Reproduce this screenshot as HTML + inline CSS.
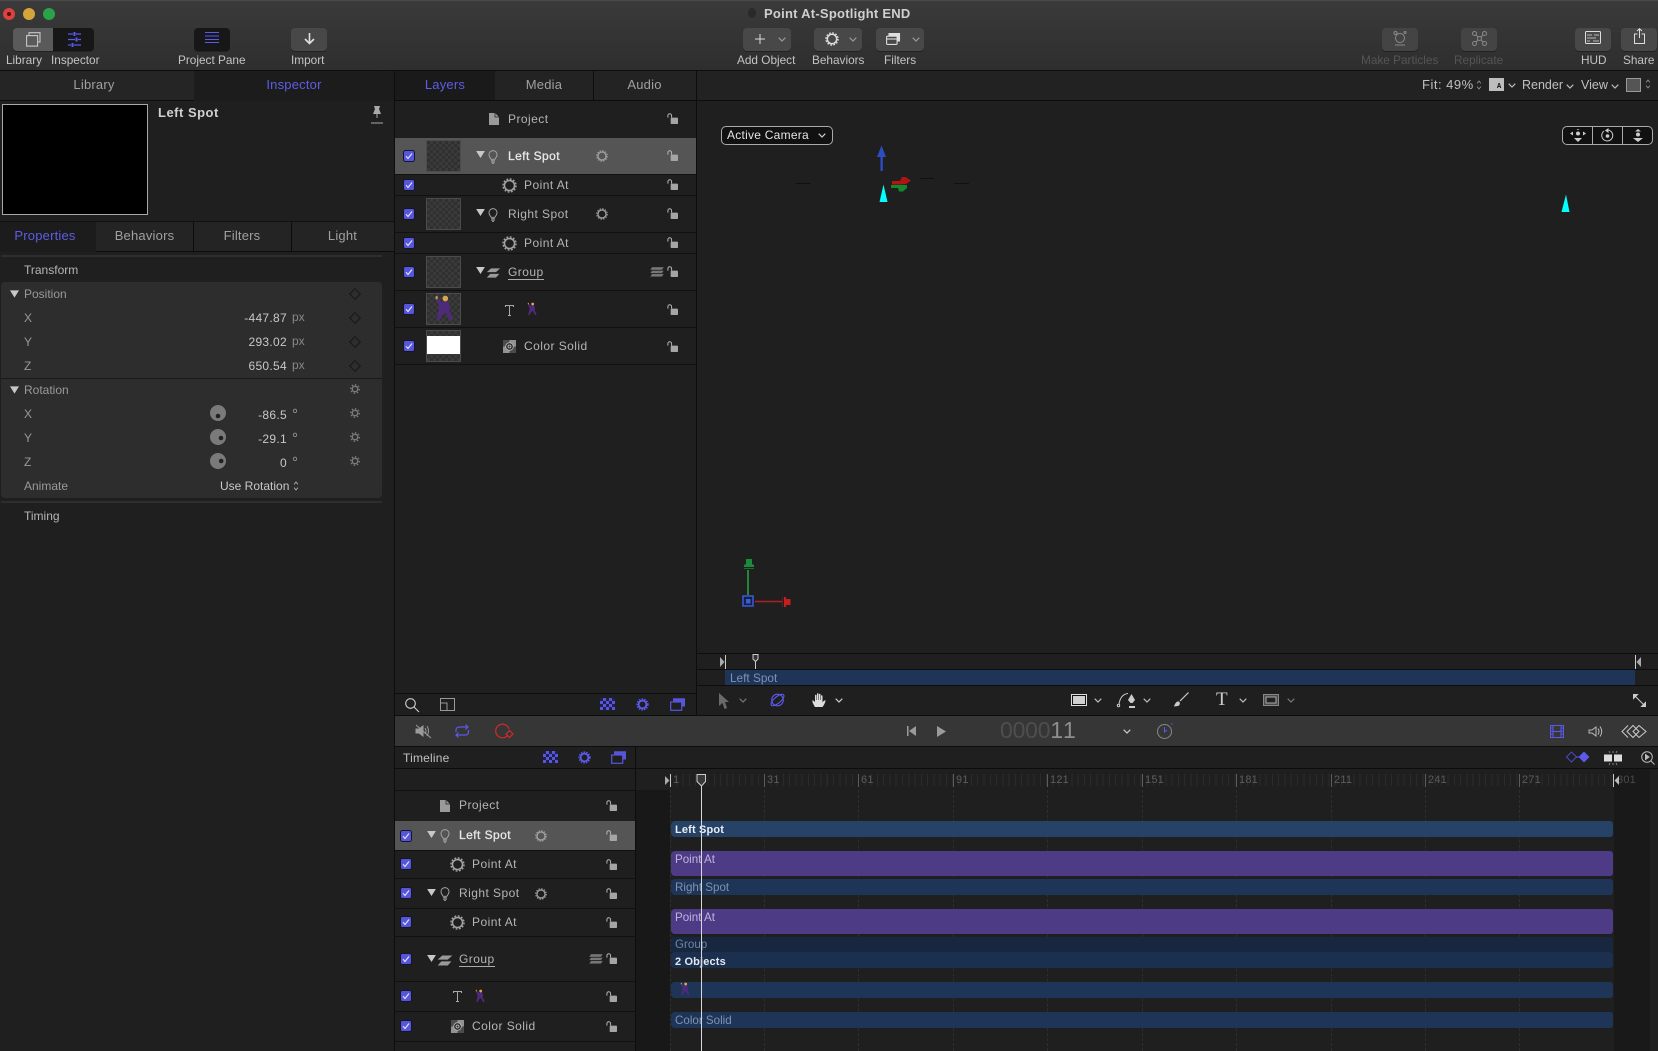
<!DOCTYPE html>
<html><head><meta charset="utf-8"><title>Point At-Spotlight END</title>
<style>
html,body{margin:0;padding:0;width:1658px;height:1051px;overflow:hidden;background:#1f1f1f}
body{position:relative;font-family:"Liberation Sans",sans-serif;font-size:12px;color:#b9b9b9}
.a{position:absolute}
.t{position:absolute;white-space:nowrap;font-size:12px;line-height:14px;color:#b5b5b5}
.l{letter-spacing:.45px}
.b{font-weight:bold}
svg.i{position:absolute;overflow:visible}
.k{position:absolute;background:#0d0d0d}
.btn{position:absolute;top:28px;height:23px;border-radius:4px;background:#484848;box-shadow:0 1px 0 #222}
.lab{position:absolute;top:53px;white-space:nowrap;line-height:14px;color:#c4c4c4;font-size:11.8px}
.tab{position:absolute;text-align:center;line-height:14px;color:#a0a0a0;font-size:13px;letter-spacing:.2px}
.th{position:absolute;left:426px;width:33px;height:30px;border:1px solid #4c4c4c;background:repeating-conic-gradient(#3a3a3a 0 25%,#303030 0 50%) 0 0/6px 6px}
.bar{position:absolute;left:671px;width:942px;background:#1f3557;border-radius:4px 3px 3px 4px;height:16px;color:#7d93b3;font-size:11.6px;line-height:15px;padding-left:4px;box-sizing:border-box;white-space:nowrap}
.pu{background:#4e3b86;color:#c0b3de;height:25px}
.val{position:absolute;width:100px;text-align:right;line-height:14px;font-size:12px;color:#c8c8c8;letter-spacing:.3px}
.deg{position:absolute;left:292px;font-size:15px;line-height:14px;color:#999}
.rn{position:absolute;top:773px;font-size:11px;line-height:14px;color:#5c5c5c;letter-spacing:.2px}
.mt{position:absolute;top:774px;width:1px;height:13px;background:#5c5c5c}
.dl{position:absolute;top:790px;height:261px;width:0;border-left:1px dashed #2e2e2e}
</style></head><body>
<svg width="0" height="0" style="position:absolute">
<defs>
<symbol id="lock" viewBox="0 0 12 12"><path d="M1 5V2.8C1 1.500 2 .8 3 .8s2 .7 2 2V5" fill="none" stroke="#b5b5b5" stroke-width="1.100"/><rect x="4" y="5" width="8" height="7" rx="1" fill="#a5a5a5"/></symbol>
<symbol id="gear" viewBox="0 0 14 14"><circle cx="7" cy="7" r="4.700" fill="none" stroke="#a5a5a5" stroke-width="1.400"/><circle cx="7" cy="7" r="6.100" fill="none" stroke="#a5a5a5" stroke-width="1.300" stroke-dasharray="1.700 1.500"/></symbol>
<symbol id="gs" viewBox="0 0 14 14"><circle cx="7" cy="7" r="3.800" fill="none" stroke="#7c7c7c" stroke-width="1.900"/><circle cx="7" cy="7" r="5.900" fill="none" stroke="#7c7c7c" stroke-width="2" stroke-dasharray="2 2.600"/></symbol>
<symbol id="bgear" viewBox="0 0 14 14"><circle cx="7" cy="7" r="4.200" fill="none" stroke="#5a5aec" stroke-width="2"/><circle cx="7" cy="7" r="5.800" fill="none" stroke="#5a5aec" stroke-width="1.600" stroke-dasharray="1.600 1.300"/></symbol>
<symbol id="chk" viewBox="0 0 12 12"><rect x=".5" y=".5" width="11" height="11" rx="2" fill="#5656dc" stroke="#15152a"/><path d="M3 6.200l2 2.300L9 3.500" fill="none" stroke="#e8e8ff" stroke-width="1.100"/></symbol>
<symbol id="bulb" viewBox="0 0 10 15"><path d="M3 10C2 8 .7 7.300.7 5A4.300 4.300 0 0 1 9.300 5C9.300 7.300 8 8 7 10Z" fill="none" stroke="#a8a8a8"/><path d="M3 11.500h4M3 13h4M4 14.500h2" stroke="#a8a8a8" fill="none"/></symbol>
<symbol id="tri" viewBox="0 0 10 8"><path d="M0 0H10L5 8Z" fill="#c8c8c8"/></symbol>
<symbol id="dia" viewBox="0 0 12 12"><path d="M6 .7L11.300 6 6 11.300.7 6Z" fill="none" stroke="#171717" stroke-width="1"/></symbol>
<symbol id="chev" viewBox="0 0 8 5"><path d="M.7.7L4 4 7.300.7" fill="none" stroke="currentColor" stroke-width="1.200"/></symbol>
<symbol id="updn" viewBox="0 0 6 12"><path d="M.7 4L3 1.200 5.300 4M.7 8L3 10.800 5.300 8" fill="none" stroke="currentColor"/></symbol>
<symbol id="mgroup" viewBox="0 0 16 12"><path d="M5 .5H16L11 5H0ZM4 7H15L11 11.500H0Z" fill="#9a9a9a"/></symbol>
<symbol id="stack" viewBox="0 0 14 10"><path d="M2 0H14L12 3H0ZM2 3.500H14L12 6.300H0ZM2 6.800H14L12 9.800H0Z" fill="#777" stroke="#222" stroke-width=".4"/></symbol>
<symbol id="cs" viewBox="0 0 13 13"><rect width="13" height="13" fill="#929292"/><path d="M0 0H6.500V6.500H0ZM6.500 6.500H13V13H6.500Z" fill="#4c4c4c"/><circle cx="6.500" cy="6.500" r="3.800" fill="#2c2c2c" stroke="#bbb" stroke-width=".8"/><circle cx="6.500" cy="6.500" r="1.500" fill="none" stroke="#ccc" stroke-width=".8"/></symbol>
<symbol id="doc" viewBox="0 0 10 12"><path d="M0 0H6L10 4V12H0Z" fill="#9a9a9a"/><path d="M6 0V4H10" fill="none" stroke="#1e1e1e" stroke-width=".7"/></symbol>
<symbol id="man" viewBox="0 0 12 16"><path d="M7.500 2.500L9.500 6 9.300 9.500 11.500 14.500 9.800 15.500 7 10.500 5.500 11 3 15.500 1.500 15 3 8.500 3 6.500 1 2.500 2.300 1.800 5 4.500 6 4Z" fill="#4f2a7c"/><circle cx="6.800" cy="2" r="1.700" fill="#d4a94a"/><rect x="1" y=".6" width="1.200" height="1.800" fill="#d4a94a"/></symbol>
<symbol id="checker" viewBox="0 0 15 12"><rect width="15" height="12" fill="#5656dc"/><path d="M0 0h3v3H0zM6 0h3v3H6zM12 0h3v3h-3zM3 3h3v3H3zM9 3h3v3H9zM0 6h3v3H0zM6 6h3v3H6zM12 6h3v3h-3zM3 9h3v3H3zM9 9h3v3H9z" fill="#20204a"/></symbol>
<symbol id="filt" viewBox="0 0 15 13"><path d="M3.500 3V.7H14.500V8H12" fill="#5656dc" stroke="#5656dc"/><rect x=".7" y="4" width="11" height="8.300" fill="#1f1f1f" stroke="#5656dc" stroke-width="1.200"/><rect x="3.500" y="1.500" width="9" height="2.500" fill="#5656dc"/></symbol>
</defs></svg>

<!-- toolbar -->
<div class="a" style="left:0;top:0;width:1658px;height:70px;background:linear-gradient(#3a3a3a,#2e2e2e);border-top:1px solid #4a4a4a;box-sizing:border-box"></div>
<div class="k" style="left:0;top:70px;width:1658px;height:1px"></div>
<div class="a" style="left:3px;top:8px;width:12px;height:12px;border-radius:50%;background:#d9423f"></div><div class="a" style="left:7px;top:12px;width:4px;height:4px;border-radius:50%;background:#5a0c0a"></div>
<div class="a" style="left:23px;top:8px;width:12px;height:12px;border-radius:50%;background:#d5a53a"></div>
<div class="a" style="left:43px;top:8px;width:12px;height:12px;border-radius:50%;background:#2aa24a"></div>
<div class="a" style="left:748px;top:8px;width:8px;height:10px;border-radius:50%;background:#2a2a2a"></div>
<div class="t b" style="left:764px;top:7px;font-size:13px;color:#cfcfcf;letter-spacing:.25px">Point At-Spotlight END</div>

<div class="btn" style="left:13px;width:41px;border-radius:4px 0 0 4px;background:#5a5a5a"></div>
<div class="btn" style="left:53px;width:41px;border-radius:0 4px 4px 0;background:#171717"></div>
<svg class="i" style="left:26px;top:32px" width="15" height="15" fill="none" stroke="#c8c8c8" stroke-width="1.100"><path d="M3 3V.7H14V10H11.500"/><rect x=".6" y="3.600" width="11" height="10.500" fill="#5a5a5a"/></svg>
<svg class="i" style="left:67px;top:32px" width="15" height="15" stroke="#5a5aec" stroke-width="1.200"><path d="M1 2H6M9 2H14M1 7.500H8M11 7.500H14M1 13H4M7 13H14"/><path d="M7.500 0V4M9.500 5.500V9.500M5.500 11V15" stroke-width="2"/></svg>
<div class="lab" style="left:6px">Library</div><div class="lab" style="left:51px">Inspector</div>

<div class="btn" style="left:194px;width:36px;background:#171717"></div>
<svg class="i" style="left:205px;top:32px" width="14" height="11" stroke="#5a5aec"><path d="M0 .5H14M0 4H14M0 7.500H14M0 10.500H14"/></svg>
<div class="lab" style="left:178px">Project Pane</div>
<div class="btn" style="left:291px;width:36px"></div>
<svg class="i" style="left:304px;top:33px" width="11" height="11" fill="none" stroke="#e0e0e0" stroke-width="1.600"><path d="M5.500 0V10M1 6L5.500 10.500 10 6"/></svg>
<div class="lab" style="left:291px">Import</div>

<div class="btn" style="left:743px;width:48px"></div>
<svg class="i" style="left:755px;top:34px" width="10" height="10" stroke="#ddd"><path d="M5 0V10M0 5H10"/></svg>
<svg class="i" style="left:778px;top:37px;color:#9a9a9a" width="8" height="5"><use href="#chev"/></svg>
<div class="lab" style="left:737px">Add Object</div>
<div class="btn" style="left:814px;width:48px"></div>
<svg class="i" style="left:825px;top:32px" width="14" height="14" viewBox="0 0 14 14" fill="none" stroke="#ddd"><circle cx="7" cy="7" r="4.700" stroke-width="1.500"/><circle cx="7" cy="7" r="6.100" stroke-width="1.300" stroke-dasharray="1.700 1.500"/></svg>
<svg class="i" style="left:849px;top:37px;color:#9a9a9a" width="8" height="5"><use href="#chev"/></svg>
<div class="lab" style="left:812px">Behaviors</div>
<div class="btn" style="left:876px;width:48px"></div>
<svg class="i" style="left:886px;top:33px" width="14" height="12" fill="none" stroke="#ddd" stroke-width="1.100"><path d="M3 3V.6H13.500V8H11" fill="#ddd"/><rect x=".6" y="3.200" width="10.500" height="8.200" rx="1" fill="#484848"/><path d="M1 6H11"/></svg>
<svg class="i" style="left:912px;top:37px;color:#9a9a9a" width="8" height="5"><use href="#chev"/></svg>
<div class="lab" style="left:884px">Filters</div>

<div class="btn" style="left:1382px;width:36px;background:#444"></div>
<svg class="i" style="left:1393px;top:31px" width="15" height="15" fill="none" stroke="#8a8a8a"><circle cx="7" cy="7" r="4.500"/><circle cx="2.500" cy="2" r="1.500"/><circle cx="12" cy="1.500" r="1"/><path d="M2 14H12"/></svg>
<div class="lab" style="left:1361px;color:#555">Make Particles</div>
<div class="btn" style="left:1461px;width:36px;background:#444"></div>
<svg class="i" style="left:1472px;top:31px" width="15" height="15" fill="none" stroke="#8a8a8a"><circle cx="7.500" cy="7.500" r="2"/><circle cx="2.500" cy="2.500" r="2"/><circle cx="12.500" cy="2.500" r="2"/><circle cx="2.500" cy="12.500" r="2"/><circle cx="12.500" cy="12.500" r="2"/><path d="M4 4L6 6M11 4L9 6M4 11L6 9M11 11L9 9"/></svg>
<div class="lab" style="left:1454px;color:#555">Replicate</div>
<div class="btn" style="left:1575px;width:36px"></div>
<svg class="i" style="left:1585px;top:31px" width="16" height="13" fill="none" stroke="#ddd"><rect x=".5" y=".5" width="15" height="12" rx="1"/><path d="M2 4H7M9 4H14M2 7H11M2 10H5M8 10H14" stroke-width=".8"/></svg>
<div class="lab" style="left:1581px">HUD</div>
<div class="btn" style="left:1621px;width:36px"></div>
<svg class="i" style="left:1634px;top:28px" width="11" height="16" fill="none" stroke="#ddd"><path d="M3.500 6H.5V15.500H10.500V6H7.500M5.500 10V1M3 3L5.500.7 8 3"/></svg>
<div class="lab" style="left:1623px">Share</div>

<!-- inspector panel -->
<div class="a" style="left:0;top:71px;width:194px;height:29px;background:#252525"></div>
<div class="a" style="left:194px;top:71px;width:200px;height:30px;background:#1c1c1c"></div>
<div class="k" style="left:0;top:100px;width:194px;height:1px"></div>
<div class="k" style="left:394px;top:71px;width:1px;height:980px"></div>
<div class="tab" style="left:0;top:78px;width:188px">Library</div>
<div class="tab" style="left:194px;top:78px;width:200px;color:#5d5de6">Inspector</div>
<div class="a" style="left:2px;top:104px;width:144px;height:109px;background:#000;border:1px solid #a8a8a8"></div>
<div class="t b" style="left:158px;top:106px;font-size:13px;color:#d0d0d0;letter-spacing:.5px">Left Spot</div>
<svg class="i" style="left:371px;top:106px" width="12" height="18" fill="#aaa"><path d="M3 0H9L8 3 10 8H2L4 3Z"/><path d="M6 8V12" stroke="#aaa"/><path d="M0 17H12" stroke="#aaa"/></svg>
<div class="k" style="left:0;top:221px;width:394px;height:1px;background:#111"></div>
<div class="a" style="left:0;top:222px;width:96px;height:30px;background:#1c1c1c"></div>
<div class="a" style="left:96px;top:222px;width:298px;height:29px;background:#242424"></div>
<div class="k" style="left:96px;top:251px;width:298px;height:1px"></div>
<div class="k" style="left:193px;top:222px;width:1px;height:29px"></div>
<div class="k" style="left:291px;top:222px;width:1px;height:29px"></div>
<div class="tab" style="left:0;top:229px;width:90px;color:#5d5de6">Properties</div>
<div class="tab" style="left:96px;top:229px;width:97px">Behaviors</div>
<div class="tab" style="left:193px;top:229px;width:98px">Filters</div>
<div class="tab" style="left:291px;top:229px;width:103px">Light</div>
<div class="a" style="left:1px;top:255px;width:381px;height:2px;background:#2e2e2e"></div>
<div class="t" style="left:24px;top:263px">Transform</div>
<div class="a" style="left:1px;top:282px;width:381px;height:216px;background:#2d2d2d;border-radius:4px"></div>
<div class="a" style="left:1px;top:378px;width:381px;height:1px;background:#1a1a1a"></div>
<div class="a" style="left:1px;top:501px;width:381px;height:2px;background:#2e2e2e"></div>
<svg class="i" style="left:10px;top:290px" width="9" height="8"><use href="#tri"/></svg>
<svg class="i" style="left:10px;top:386px" width="9" height="8"><use href="#tri"/></svg>
<div class="t" style="left:24px;top:287px;color:#999">Position</div>
<div class="t" style="left:24px;top:311px;color:#999">X</div>
<div class="t" style="left:24px;top:335px;color:#999">Y</div>
<div class="t" style="left:24px;top:359px;color:#999">Z</div>
<div class="t" style="left:24px;top:383px;color:#999">Rotation</div>
<div class="t" style="left:24px;top:407px;color:#999">X</div>
<div class="t" style="left:24px;top:431px;color:#999">Y</div>
<div class="t" style="left:24px;top:455px;color:#999">Z</div>
<div class="t" style="left:24px;top:479px;color:#999">Animate</div>
<div class="val" style="left:187px;top:311px">-447.87</div><div class="t" style="left:292px;top:310px;color:#888">px</div>
<div class="val" style="left:187px;top:335px">293.02</div><div class="t" style="left:292px;top:334px;color:#888">px</div>
<div class="val" style="left:187px;top:359px">650.54</div><div class="t" style="left:292px;top:358px;color:#888">px</div>
<div class="val" style="left:187px;top:408px">-86.5</div><div class="deg" style="top:408px">°</div>
<div class="val" style="left:187px;top:432px">-29.1</div><div class="deg" style="top:432px">°</div>
<div class="val" style="left:187px;top:456px">0</div><div class="deg" style="top:456px">°</div>
<div class="t" style="left:220px;top:479px;color:#c8c8c8">Use Rotation</div>
<svg class="i" style="left:293px;top:481px;color:#bbb" width="6" height="10"><use href="#updn"/></svg>
<svg class="i" style="left:349px;top:288px" width="12" height="12"><use href="#dia"/></svg>
<svg class="i" style="left:349px;top:312px" width="12" height="12"><use href="#dia"/></svg>
<svg class="i" style="left:349px;top:336px" width="12" height="12"><use href="#dia"/></svg>
<svg class="i" style="left:349px;top:360px" width="12" height="12"><use href="#dia"/></svg>
<svg class="i" style="left:350px;top:384px" width="10" height="10"><use href="#gs"/></svg>
<svg class="i" style="left:350px;top:408px" width="10" height="10"><use href="#gs"/></svg>
<svg class="i" style="left:350px;top:432px" width="10" height="10"><use href="#gs"/></svg>
<svg class="i" style="left:350px;top:456px" width="10" height="10"><use href="#gs"/></svg>
<svg class="i" style="left:210px;top:405px" width="16" height="16"><circle cx="8" cy="8" r="8" fill="#7a7a7a"/><circle cx="8" cy="11" r="2.300" fill="#222"/></svg>
<svg class="i" style="left:210px;top:429px" width="16" height="16"><circle cx="8" cy="8" r="8" fill="#7a7a7a"/><circle cx="11" cy="9" r="2.300" fill="#222"/></svg>
<svg class="i" style="left:210px;top:453px" width="16" height="16"><circle cx="8" cy="8" r="8" fill="#7a7a7a"/><circle cx="11.200" cy="8" r="2.300" fill="#222"/></svg>
<div class="t" style="left:24px;top:509px">Timing</div>

<!-- layers panel -->
<div class="a" style="left:395px;top:71px;width:100px;height:30px;background:#1a1a1a"></div>
<div class="a" style="left:495px;top:71px;width:201px;height:29px;background:#232323"></div>
<div class="k" style="left:495px;top:100px;width:201px;height:1px"></div>
<div class="k" style="left:593px;top:71px;width:1px;height:29px"></div>
<div class="k" style="left:696px;top:71px;width:1px;height:645px"></div>
<div class="tab" style="left:395px;top:78px;width:100px;color:#5d5de6">Layers</div>
<div class="tab" style="left:495px;top:78px;width:98px">Media</div>
<div class="tab" style="left:593px;top:78px;width:103px">Audio</div>
<div class="a" style="left:395px;top:138px;width:301px;height:36px;background:#555"></div>
<div class="k" style="left:395px;top:174px;width:301px;height:1px;background:#111"></div>
<div class="k" style="left:395px;top:195px;width:301px;height:1px;background:#111"></div>
<div class="k" style="left:395px;top:232px;width:301px;height:1px;background:#111"></div>
<div class="k" style="left:395px;top:253px;width:301px;height:1px;background:#111"></div>
<div class="k" style="left:395px;top:290px;width:301px;height:1px;background:#111"></div>
<div class="k" style="left:395px;top:327px;width:301px;height:1px;background:#111"></div>
<div class="k" style="left:395px;top:364px;width:301px;height:1px;background:#111"></div>

<svg class="i" style="left:489px;top:113px" width="10" height="12"><use href="#doc"/></svg>
<div class="t l" style="left:508px;top:112px">Project</div>
<svg class="i" style="left:667px;top:113px" width="11" height="11"><use href="#lock"/></svg>

<svg class="i" style="left:403px;top:150px" width="12" height="12"><use href="#chk"/></svg>
<div class="th" style="top:140px"></div>
<svg class="i" style="left:476px;top:151px" width="9" height="7"><use href="#tri"/></svg>
<svg class="i" style="left:488px;top:150px" width="10" height="14"><use href="#bulb"/></svg>
<div class="t l" style="left:508px;top:149px;color:#e8e8e8;-webkit-text-stroke:.3px #e8e8e8">Left Spot</div>
<svg class="i" style="left:596px;top:150px" width="12" height="12"><use href="#gear"/></svg>
<svg class="i" style="left:667px;top:150px" width="11" height="11"><use href="#lock"/></svg>

<svg class="i" style="left:403px;top:179px" width="12" height="12"><use href="#chk"/></svg>
<svg class="i" style="left:502px;top:178px" width="15" height="15"><use href="#gear"/></svg>
<div class="t l" style="left:524px;top:178px">Point At</div>
<svg class="i" style="left:667px;top:179px" width="11" height="11"><use href="#lock"/></svg>

<svg class="i" style="left:403px;top:208px" width="12" height="12"><use href="#chk"/></svg>
<div class="th" style="top:198px"></div>
<svg class="i" style="left:476px;top:209px" width="9" height="7"><use href="#tri"/></svg>
<svg class="i" style="left:488px;top:208px" width="10" height="14"><use href="#bulb"/></svg>
<div class="t l" style="left:508px;top:207px">Right Spot</div>
<svg class="i" style="left:596px;top:208px" width="12" height="12"><use href="#gear"/></svg>
<svg class="i" style="left:667px;top:208px" width="11" height="11"><use href="#lock"/></svg>

<svg class="i" style="left:403px;top:237px" width="12" height="12"><use href="#chk"/></svg>
<svg class="i" style="left:502px;top:236px" width="15" height="15"><use href="#gear"/></svg>
<div class="t l" style="left:524px;top:236px">Point At</div>
<svg class="i" style="left:667px;top:237px" width="11" height="11"><use href="#lock"/></svg>

<svg class="i" style="left:403px;top:266px" width="12" height="12"><use href="#chk"/></svg>
<div class="th" style="top:256px"></div>
<svg class="i" style="left:476px;top:267px" width="9" height="7"><use href="#tri"/></svg>
<svg class="i" style="left:486px;top:268px" width="15" height="10"><use href="#mgroup"/></svg>
<div class="t l" style="left:508px;top:266px;border-bottom:1px solid #aaa;line-height:13px">Group</div>
<svg class="i" style="left:650px;top:267px" width="14" height="10"><use href="#stack"/></svg>
<svg class="i" style="left:667px;top:266px" width="11" height="11"><use href="#lock"/></svg>

<svg class="i" style="left:403px;top:303px" width="12" height="12"><use href="#chk"/></svg>
<div class="th" style="top:293px"></div>
<svg class="i" style="left:434px;top:294px" width="20" height="29"><use href="#man"/></svg>
<svg class="i" style="left:505px;top:305px" width="9" height="11" fill="none" stroke="#aaa"><path d="M.5 2V.5H8.500V2M4.500 .5V10.500M3 10.500H6"/></svg>
<svg class="i" style="left:527px;top:302px" width="10" height="14"><use href="#man"/></svg>
<svg class="i" style="left:667px;top:304px" width="11" height="11"><use href="#lock"/></svg>

<svg class="i" style="left:403px;top:340px" width="12" height="12"><use href="#chk"/></svg>
<div class="th" style="top:330px"></div>
<div class="a" style="left:427px;top:336px;width:33px;height:18px;background:#fff"></div>
<svg class="i" style="left:503px;top:340px" width="13" height="13"><use href="#cs"/></svg>
<div class="t l" style="left:524px;top:339px">Color Solid</div>
<svg class="i" style="left:667px;top:341px" width="11" height="11"><use href="#lock"/></svg>

<div class="k" style="left:395px;top:693px;width:301px;height:1px"></div>
<svg class="i" style="left:405px;top:698px" width="14" height="14" fill="none" stroke="#ccc" stroke-width="1.100"><circle cx="5.500" cy="5.500" r="4.800"/><path d="M9 9L14 14"/></svg>
<svg class="i" style="left:440px;top:698px" width="15" height="13" fill="none" stroke="#999"><rect x=".5" y=".5" width="14" height="12"/><path d="M.5 5H7V12.500"/></svg>
<svg class="i" style="left:600px;top:698px" width="15" height="12"><use href="#checker"/></svg>
<svg class="i" style="left:636px;top:698px" width="13" height="13"><use href="#bgear"/></svg>
<svg class="i" style="left:670px;top:698px" width="15" height="13"><use href="#filt"/></svg>

<!-- canvas -->
<div class="k" style="left:395px;top:100px;width:1263px;height:1px"></div>
<div class="a" style="left:697px;top:71px;width:961px;height:29px;background:#222"></div>
<div class="t" style="left:1422px;top:78px;font-size:13px;color:#c0c0c0;letter-spacing:.5px">Fit: 49%</div>
<svg class="i" style="left:1476px;top:80px;color:#999" width="6" height="10"><use href="#updn"/></svg>
<div class="a" style="left:1489px;top:78px;width:15px;height:13px;background:#bdbdbd"></div>
<div class="a" style="left:1497px;top:84px;font-size:7px;line-height:7px;color:#111;font-family:'Liberation Mono',monospace;font-weight:bold">A</div>
<svg class="i" style="left:1508px;top:83px;color:#bbb" width="8" height="5"><use href="#chev"/></svg>
<div class="t" style="left:1522px;top:78px;color:#c0c0c0;font-size:12.500px">Render</div>
<svg class="i" style="left:1566px;top:84px;color:#bbb" width="8" height="5"><use href="#chev"/></svg>
<div class="t" style="left:1581px;top:78px;color:#c0c0c0;font-size:12.500px">View</div>
<svg class="i" style="left:1611px;top:84px;color:#bbb" width="8" height="5"><use href="#chev"/></svg>
<div class="a" style="left:1626px;top:78px;width:13px;height:12px;background:#555;border:1px solid #999"></div>
<svg class="i" style="left:1645px;top:79px;color:#999" width="6" height="10"><use href="#updn"/></svg>

<div class="a" style="left:721px;top:126px;width:110px;height:17px;background:#111;border:1px solid #aaa;border-radius:5px"></div>
<div class="t" style="left:727px;top:128px;color:#e4e4e4;letter-spacing:.25px">Active Camera</div>
<svg class="i" style="left:818px;top:133px;color:#ccc" width="8" height="5"><use href="#chev"/></svg>

<div class="a" style="left:1562px;top:126px;width:89px;height:17px;background:#111;border:1px solid #aaa;border-radius:5px"></div>
<div class="a" style="left:1592px;top:126px;width:1px;height:19px;background:#aaa"></div>
<div class="a" style="left:1622px;top:126px;width:1px;height:19px;background:#aaa"></div>
<svg class="i" style="left:1570px;top:129px" width="16" height="13" fill="#ccc"><circle cx="8" cy="4.500" r="2"/><path d="M0 4.500L3 2.500V6.500ZM16 4.500L13 2.500V6.500ZM4 9H12L8 13ZM6.500 1L8 0 9.500 1Z"/></svg>
<svg class="i" style="left:1601px;top:129px" width="13" height="13" fill="none" stroke="#ccc"><path d="M3 2A5.500 5.500 0 1 0 7 1"/><path d="M7 0V3L4.800 1.500Z" fill="#ccc"/><circle cx="6.500" cy="7" r="1.800" fill="#ccc" stroke="none"/></svg>
<svg class="i" style="left:1633px;top:129px" width="10" height="13" fill="#ccc"><path d="M5 0L8 2.500H2ZM0 9H10L5 13Z"/><circle cx="5" cy="5.500" r="2"/></svg>

<svg class="i" style="left:876px;top:145px" width="12" height="27"><path d="M4.500 26V12H1L5.500 .5 10 12H6.800V26Z" fill="#2e4cc4"/></svg>
<svg class="i" style="left:879px;top:184px" width="10" height="19"><path d="M4.500 .5L8.500 18H.5Z" fill="#00ffff"/></svg>
<svg class="i" style="left:1561px;top:194px" width="10" height="19"><path d="M5 .5L8.500 18H.5Z" fill="#00ffff"/></svg>
<svg class="i" style="left:891px;top:176px" width="20" height="16"><path d="M1 5H9L11 1H14.500L20 4.500 15 8 10 8.500H1Z" fill="#b01414"/><path d="M0 9H16V12L12 15.500H8L7 12H0Z" fill="#128a2c"/></svg>
<div class="a" style="left:796px;top:183px;width:15px;height:1px;background:#111"></div>
<div class="a" style="left:920px;top:178px;width:14px;height:1px;background:#111"></div>
<div class="a" style="left:954px;top:183px;width:15px;height:1px;background:#111"></div>
<svg class="i" style="left:742px;top:558px" width="42" height="50"><path d="M2 9V7L4 6V1H10V6L12 7V9Z" fill="#1a8a3c"/><path d="M2 10.500H12" stroke="#1a6a2c"/><path d="M6 12V37" stroke="#25a040" stroke-width="1.600"/><rect x="1" y="38" width="10" height="10" fill="#14203c" stroke="#3a5ae0" stroke-width="1.500"/><rect x="4" y="41" width="4.500" height="4.500" fill="#3a5ae0"/><path d="M13 43.500H40" stroke="#b02020" stroke-width="1.600"/><path d="M40.500 39V49" stroke="#5a1c1c"/><path d="M42 39H44V41H48.500V47H44V49H42Z" fill="#c02020"/></svg>

<!-- mini timeline -->
<div class="k" style="left:697px;top:653px;width:961px;height:1px"></div>
<div class="k" style="left:697px;top:669px;width:961px;height:1px"></div>
<div class="k" style="left:697px;top:685px;width:961px;height:1px"></div>
<div class="a" style="left:725px;top:670px;width:910px;height:15px;background:#1f3557;color:#7d93b3;line-height:16px;padding-left:5px;box-sizing:border-box;font-size:11.800px">Left Spot</div>
<svg class="i" style="left:720px;top:655px" width="6" height="14"><path d="M0 2L4.500 7 0 12Z" fill="#aaa"/><path d="M5.500 0V14" stroke="#ccc"/></svg>
<svg class="i" style="left:752px;top:654px" width="7" height="15"><path d="M1 .5H6V5L3.500 7.500 1 5Z" fill="#333" stroke="#ccc"/><path d="M3.500 7V15" stroke="#ccc"/></svg>
<svg class="i" style="left:1635px;top:655px" width="6" height="14"><path d="M6 2L1.500 7 6 12Z" fill="#aaa"/><path d="M.5 0V14" stroke="#ccc"/></svg>

<!-- canvas tools -->
<svg class="i" style="left:719px;top:693px" width="10" height="16"><path d="M0 0L10 9H6L8 15 5.500 16 3.500 10 0 13Z" fill="#6a6a6a"/></svg>
<svg class="i" style="left:739px;top:698px;color:#777" width="8" height="5"><use href="#chev"/></svg>
<svg class="i" style="left:769px;top:692px" width="17" height="16" fill="none" stroke="#5a5aec" stroke-width="1.100"><circle cx="8.500" cy="8" r="5.800"/><ellipse cx="8.500" cy="8" rx="8" ry="3.200" transform="rotate(-40 8.500 8)"/></svg>
<svg class="i" style="left:812px;top:693px" width="14" height="15" fill="#ddd"><path d="M3 14C1 11 0 8 .5 7.500 1.500 7 2.500 9 3 9V2.500C3 1.500 4.500 1.500 4.500 2.500V7H5V1C5 0 6.500 0 6.500 1V7H7V1.500C7 .5 8.500 .5 8.500 1.500V7H9V3C9 2 10.500 2 10.500 3V9.500C12 7 13.500 7 13.500 8 13 10 12 12 10.500 14Z"/></svg>
<svg class="i" style="left:835px;top:698px;color:#ccc" width="8" height="5"><use href="#chev"/></svg>
<svg class="i" style="left:1071px;top:694px" width="16" height="12"><rect x=".5" y=".5" width="15" height="11" fill="#111" stroke="#ddd"/><rect x="2" y="2" width="12" height="8" fill="#cfcfcf"/></svg>
<svg class="i" style="left:1094px;top:698px;color:#bbb" width="8" height="5"><use href="#chev"/></svg>
<svg class="i" style="left:1117px;top:692px" width="20" height="16" fill="none" stroke="#ccc"><circle cx="1.500" cy="13.500" r="1.200"/><path d="M2 12C3 6 6 2 11 1.500"/><path d="M14.500 2L18 8 15.500 11H13.500L11 8Z" fill="#ccc" stroke="none"/><path d="M12 15H18" stroke-width="2"/></svg>
<svg class="i" style="left:1143px;top:698px;color:#bbb" width="8" height="5"><use href="#chev"/></svg>
<svg class="i" style="left:1174px;top:692px" width="15" height="15"><path d="M14.500 .5L6 9" stroke="#ccc" stroke-width="1.200"/><path d="M0 14.500C1 11 3 9 5 9.500 6.500 11 6 13 4 14Z" fill="#ccc"/></svg>
<div class="a" style="left:1216px;top:690px;font-family:'Liberation Serif',serif;font-size:19px;line-height:20px;color:#ccc">T</div>
<svg class="i" style="left:1239px;top:698px;color:#bbb" width="8" height="5"><use href="#chev"/></svg>
<svg class="i" style="left:1263px;top:694px" width="16" height="12" fill="none" stroke="#888" stroke-width="1"><rect x=".5" y=".5" width="15" height="11" fill="#4a4a4a"/><rect x="3" y="3" width="10" height="6" fill="#222" stroke="#aaa"/></svg>
<svg class="i" style="left:1287px;top:698px;color:#777" width="8" height="5"><use href="#chev"/></svg>
<svg class="i" style="left:1633px;top:694px" width="13" height="13" fill="#ccc" stroke="#ccc"><path d="M1 1L12 12" fill="none"/><path d="M.5 .5H4.500L.5 4.500ZM12.500 12.500H8.500L12.500 8.500Z"/></svg>

<!-- transport -->
<div class="k" style="left:395px;top:715px;width:1263px;height:1px"></div>
<div class="a" style="left:395px;top:716px;width:1263px;height:30px;background:#363636"></div>
<div class="k" style="left:395px;top:746px;width:1263px;height:1px"></div>
<svg class="i" style="left:415px;top:724px" width="17" height="15" fill="none" stroke="#9a9a9a"><path d="M1 5H4L8 2V12L4 9H1Z" fill="#9a9a9a"/><path d="M10 4Q12 7 10 10M12 2Q15 7 12 12"/><path d="M1 1L16 14"/></svg>
<svg class="i" style="left:454px;top:723px" width="16" height="16" fill="none" stroke="#5a5aec" stroke-width="1.200"><path d="M2 9V7C2 5 3.500 4 5.500 4H14M11.500 1.500L14 4 11.500 6.500M14.500 7V9C14.500 11 13 12 11 12H2M4.500 9.500L2 12 4.500 14.500"/></svg>
<svg class="i" style="left:495px;top:723px" width="20" height="16" fill="none" stroke="#d12a2a" stroke-width="1.200"><path d="M13 12A6.800 6.800 0 1 1 14 6"/><path d="M14.500 7.500L18 11 14.500 14.500 11 11Z"/></svg>
<svg class="i" style="left:907px;top:725px" width="9" height="12" fill="#9a9a9a"><path d="M0 1H1.500V11H0ZM9 1V11L2 6Z"/></svg>
<svg class="i" style="left:937px;top:726px" width="10" height="11" fill="#9a9a9a"><path d="M0 0L9 5.500 0 11Z"/></svg>
<div class="a" style="left:1000px;top:717px;font-size:23px;line-height:26px;color:#4e4e4e;letter-spacing:-.2px">0000<span style="color:#8e8e8e;letter-spacing:1.600px">11</span></div>
<svg class="i" style="left:1123px;top:729px;color:#ccc" width="8" height="5"><use href="#chev"/></svg>
<svg class="i" style="left:1157px;top:722px" width="18" height="18" fill="none"><circle cx="7.500" cy="9.500" r="7" stroke="#888"/><path d="M7.500 5V10L10 8" stroke="#5a5aec"/><circle cx="15" cy="2" r=".7" fill="#5a5aec"/></svg>
<svg class="i" style="left:1550px;top:725px" width="14" height="13"><rect x=".5" y=".5" width="13" height="12" fill="none" stroke="#5a5aec"/><path d="M.5 3H3M.5 6H3M.5 9H3M11 3H13.500M11 6H13.500M11 9H13.500M3 .5V12.500M11 .5V12.500M3 6.500H11" stroke="#5a5aec"/></svg>
<svg class="i" style="left:1589px;top:725px" width="14" height="13" fill="none" stroke="#bbb"><path d="M0 5H3L7 2V11L3 8H0Z"/><path d="M9 3.500Q11 6.500 9 9.500M11 1.500Q14.500 6.500 11 11.500"/></svg>
<svg class="i" style="left:1621px;top:725px" width="26" height="13" fill="none" stroke="#ccc"><path d="M7 .5L1 6.500 7 12.500M12 .5L6 6.500 12 12.500 18 6.500ZM18 .5L25 6.500 18 12.500 12 6.500Z"/></svg>

<!-- timeline header -->
<div class="k" style="left:395px;top:768px;width:1263px;height:1px"></div>
<div class="k" style="left:635px;top:747px;width:1px;height:304px"></div>
<div class="t" style="left:403px;top:751px;color:#c0c0c0;letter-spacing:.2px">Timeline</div>
<svg class="i" style="left:543px;top:751px" width="15" height="12"><use href="#checker"/></svg>
<svg class="i" style="left:578px;top:751px" width="13" height="13"><use href="#bgear"/></svg>
<svg class="i" style="left:611px;top:751px" width="15" height="13"><use href="#filt"/></svg>
<svg class="i" style="left:1566px;top:751px" width="24" height="12"><path d="M5.500 1L10.500 6 5.500 11 .5 6Z" fill="none" stroke="#4a4ac8"/><path d="M10 6H15" stroke="#5a5aec"/><path d="M18 .5L23.500 6 18 11.500 12.500 6Z" fill="#5a5aec"/></svg>
<svg class="i" style="left:1604px;top:751px" width="18" height="14" fill="#ddd"><path d="M0 3.500H8V10.500H0ZM10 3.500H18V10.500H10Z"/><path d="M9 0V2M9 12V14M5 0L6 2M13 0L12 2M5 14L6 12M13 14L12 12" stroke="#999" fill="none" stroke-width=".8"/></svg>
<svg class="i" style="left:1641px;top:751px" width="14" height="14" fill="none" stroke="#bbb"><circle cx="6" cy="6" r="5.300"/><path d="M10 10L13.500 13.500"/><path d="M4.500 3.500L8 6 4.500 8.500Z" fill="#bbb"/></svg>

<!-- timeline layers list -->
<div class="a" style="left:395px;top:821px;width:240px;height:29px;background:#555"></div>
<div class="k" style="left:395px;top:790px;width:240px;height:1px;background:#111"></div>
<div class="k" style="left:395px;top:850px;width:240px;height:1px;background:#111"></div>
<div class="k" style="left:395px;top:878px;width:240px;height:1px;background:#111"></div>
<div class="k" style="left:395px;top:908px;width:240px;height:1px;background:#111"></div>
<div class="k" style="left:395px;top:936px;width:240px;height:1px;background:#111"></div>
<div class="k" style="left:395px;top:981px;width:240px;height:1px;background:#111"></div>
<div class="k" style="left:395px;top:1011px;width:240px;height:1px;background:#111"></div>
<div class="k" style="left:395px;top:1041px;width:240px;height:1px;background:#111"></div>

<svg class="i" style="left:440px;top:800px" width="10" height="12"><use href="#doc"/></svg>
<div class="t l" style="left:459px;top:798px">Project</div>
<svg class="i" style="left:606px;top:800px" width="11" height="11"><use href="#lock"/></svg>

<svg class="i" style="left:400px;top:830px" width="12" height="12"><use href="#chk"/></svg>
<svg class="i" style="left:427px;top:831px" width="9" height="7"><use href="#tri"/></svg>
<svg class="i" style="left:440px;top:829px" width="10" height="14"><use href="#bulb"/></svg>
<div class="t l" style="left:459px;top:828px;color:#e8e8e8;-webkit-text-stroke:.3px #e8e8e8">Left Spot</div>
<svg class="i" style="left:535px;top:830px" width="12" height="12"><use href="#gear"/></svg>
<svg class="i" style="left:606px;top:830px" width="11" height="11"><use href="#lock"/></svg>

<svg class="i" style="left:400px;top:858px" width="12" height="12"><use href="#chk"/></svg>
<svg class="i" style="left:450px;top:857px" width="15" height="15"><use href="#gear"/></svg>
<div class="t l" style="left:472px;top:857px">Point At</div>
<svg class="i" style="left:606px;top:859px" width="11" height="11"><use href="#lock"/></svg>

<svg class="i" style="left:400px;top:887px" width="12" height="12"><use href="#chk"/></svg>
<svg class="i" style="left:427px;top:889px" width="9" height="7"><use href="#tri"/></svg>
<svg class="i" style="left:440px;top:887px" width="10" height="14"><use href="#bulb"/></svg>
<div class="t l" style="left:459px;top:886px">Right Spot</div>
<svg class="i" style="left:535px;top:888px" width="12" height="12"><use href="#gear"/></svg>
<svg class="i" style="left:606px;top:888px" width="11" height="11"><use href="#lock"/></svg>

<svg class="i" style="left:400px;top:916px" width="12" height="12"><use href="#chk"/></svg>
<svg class="i" style="left:450px;top:915px" width="15" height="15"><use href="#gear"/></svg>
<div class="t l" style="left:472px;top:915px">Point At</div>
<svg class="i" style="left:606px;top:917px" width="11" height="11"><use href="#lock"/></svg>

<svg class="i" style="left:400px;top:953px" width="12" height="12"><use href="#chk"/></svg>
<svg class="i" style="left:427px;top:955px" width="9" height="7"><use href="#tri"/></svg>
<svg class="i" style="left:437px;top:955px" width="16" height="11"><use href="#mgroup"/></svg>
<div class="t l" style="left:459px;top:953px;border-bottom:1px solid #aaa;line-height:13px">Group</div>
<svg class="i" style="left:589px;top:954px" width="14" height="10"><use href="#stack"/></svg>
<svg class="i" style="left:606px;top:953px" width="11" height="11"><use href="#lock"/></svg>

<svg class="i" style="left:400px;top:990px" width="12" height="12"><use href="#chk"/></svg>
<svg class="i" style="left:453px;top:991px" width="9" height="11" fill="none" stroke="#aaa"><path d="M.5 2V.5H8.500V2M4.500 .5V10.500M3 10.500H6"/></svg>
<svg class="i" style="left:475px;top:989px" width="10" height="14"><use href="#man"/></svg>
<svg class="i" style="left:606px;top:991px" width="11" height="11"><use href="#lock"/></svg>

<svg class="i" style="left:400px;top:1020px" width="12" height="12"><use href="#chk"/></svg>
<svg class="i" style="left:451px;top:1020px" width="13" height="13"><use href="#cs"/></svg>
<div class="t l" style="left:472px;top:1019px">Color Solid</div>
<svg class="i" style="left:606px;top:1021px" width="11" height="11"><use href="#lock"/></svg>

<!-- ruler and tracks -->
<div class="a" style="left:636px;top:790px;width:34px;height:261px;background:#181818"></div>
<div class="a" style="left:1614px;top:769px;width:36px;height:282px;background:#191919"></div>
<div class="a" style="left:670px;top:774px;width:943px;height:12px;background:repeating-linear-gradient(90deg,#2b2b2b 0 1px,transparent 1px 6.27px)"></div>
<div class="mt" style="left:670px"></div><div class="mt" style="left:764px"></div><div class="mt" style="left:858px"></div><div class="mt" style="left:953px"></div><div class="mt" style="left:1047px"></div><div class="mt" style="left:1142px"></div><div class="mt" style="left:1236px"></div><div class="mt" style="left:1331px"></div><div class="mt" style="left:1425px"></div><div class="mt" style="left:1519px"></div>
<div class="rn" style="left:673px">1</div><div class="rn" style="left:767px">31</div><div class="rn" style="left:861px">61</div><div class="rn" style="left:956px">91</div><div class="rn" style="left:1050px">121</div><div class="rn" style="left:1145px">151</div><div class="rn" style="left:1239px">181</div><div class="rn" style="left:1334px">211</div><div class="rn" style="left:1428px">241</div><div class="rn" style="left:1522px">271</div><div class="rn" style="left:1617px;color:#4a4a4a">301</div>
<div class="dl" style="left:670px"></div><div class="dl" style="left:764px"></div><div class="dl" style="left:858px"></div><div class="dl" style="left:953px"></div><div class="dl" style="left:1047px"></div><div class="dl" style="left:1142px"></div><div class="dl" style="left:1236px"></div><div class="dl" style="left:1331px"></div><div class="dl" style="left:1425px"></div><div class="dl" style="left:1519px"></div>

<div class="bar" style="top:821px;background:#264266;color:#e8eef6;font-weight:bold;font-size:11px;letter-spacing:.15px;line-height:18px">Left Spot</div>
<div class="bar pu" style="top:851px;line-height:18px">Point At</div>
<div class="bar" style="top:879px;line-height:17px">Right Spot</div>
<div class="bar pu" style="top:909px;line-height:18px">Point At</div>
<div class="bar" style="top:937px;background:#182740;height:15px;color:#6f84a4;border-radius:3px 3px 0 0;line-height:16px">Group</div>
<div class="bar" style="top:952px;background:#1b2f4f;color:#e4e8f0;font-weight:bold;font-size:11px;letter-spacing:.15px;line-height:21px">2 Objects</div>
<div class="bar" style="top:982px"></div>
<svg class="i" style="left:680px;top:982px" width="10" height="14"><use href="#man"/></svg>
<div class="bar" style="top:1012px;line-height:18px">Color Solid</div>

<svg class="i" style="left:665px;top:774px" width="6" height="13"><path d="M0 2L4.500 6.500 0 11Z" fill="#aaa"/><path d="M5.500 0V13" stroke="#ccc"/></svg>
<svg class="i" style="left:1613px;top:774px" width="6" height="13"><path d="M6 2L1.500 6.500 6 11Z" fill="#bbb"/><path d="M.5 0V13" stroke="#ccc"/></svg>
<div class="a" style="left:701px;top:786px;width:1px;height:265px;background:#d8d8d8"></div>
<svg class="i" style="left:696px;top:774px" width="11" height="13"><path d="M1 .5H9.500V7.500L5.500 12 1 7.500Z" fill="#3a3a3a" stroke="#ccc"/></svg>
</body></html>
